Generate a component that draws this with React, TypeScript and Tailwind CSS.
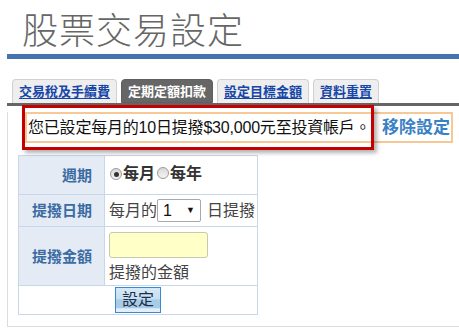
const tabs = [
  { label: "交易稅及手續費", active: false },
  { label: "定期定額扣款", active: true },
  { label: "設定目標金額", active: false },
  { label: "資料重置", active: false },
];

function Radio({ checked }: { checked?: boolean }) {
  return (
    <span className="inline-flex items-center justify-center w-[12px] h-[12px] rounded-full border border-[#9a9a9a] bg-[linear-gradient(#d8d8d8,#f4f4f4)]">
      {checked && <span className="w-[5px] h-[5px] rounded-full bg-[#333]" />}
    </span>
  );
}

export default function App() {
  return (
    <div className="relative w-[459px] h-[336px] overflow-hidden bg-white font-['Liberation_Sans','Noto_Sans_CJK_TC',sans-serif] text-[#222]">
      <h1 className="h-[54px] pt-[10px] pl-[22px] text-[36px] leading-[36px] font-light text-[#666] tracking-[1px] font-['Noto_Sans_CJK_TC',serif]">
        股票交易設定
      </h1>
      <div className="ml-[7px] h-[5px] bg-[#4374ad]" />

      <div className="mt-[20px] ml-[12px] flex gap-[4px] h-[24px]">
        {tabs.map((t) => (
          <div
            key={t.label}
            className={
              t.active
                ? "px-[6px] flex items-center rounded-t-[4px] border border-[#5f5f5f] bg-[#666] text-white text-[13px] font-bold leading-none"
                : "px-[6px] flex items-center rounded-t-[4px] border border-b-0 border-[#d0d0d0] bg-[#eee] text-[#1546a8] text-[13px] font-bold leading-none underline underline-offset-2"
            }
          >
            {t.label}
          </div>
        ))}
      </div>
      <div className="ml-[7px] h-[3px] bg-[#666]" />

      <div className="ml-[7px] h-[215px] border-l border-b border-[#dcdcdc]">
        <div className="mt-[6px] ml-[17px] w-[428px] h-[31px] border-2 border-[#f6c896] flex items-center justify-between pl-[1px] pr-[1px] text-[16px] leading-none">
          <span className="text-[#111] tracking-[-0.2px]">您已設定每月的10日提撥$30,000元至投資帳戶。</span>
          <span className="text-[17px] font-bold text-[#3a80c4]">移除設定</span>
        </div>

        <table className="mt-[12px] ml-[10px] w-[240px] border-collapse text-[16px] leading-none">
          <tbody>
            <tr className="h-[39px]">
              <td className="w-[86px] border border-[#c8d8ea] bg-[#e4ebf4] text-right pr-[12px] text-[15px] font-bold text-[#3c6ba3]">週期</td>
              <td className="border border-[#c8d8ea] pl-[5px] pb-[4px]">
                <span className="inline-flex items-center font-bold text-[#333]">
                  <Radio checked />
                  <span className="ml-[1px]">每月</span>
                  <span className="ml-[2px]"><Radio /></span>
                  <span className="ml-[1px]">每年</span>
                </span>
              </td>
            </tr>
            <tr className="h-[32px]">
              <td className="border border-[#c8d8ea] bg-[#e4ebf4] text-right pr-[12px] text-[15px] font-bold text-[#3c6ba3]">提撥日期</td>
              <td className="border border-[#c8d8ea] pl-[4px]">
                <div className="flex items-center text-[#444]">
                  <span>每月的</span>
                  <span className="w-[44px] h-[23px] border border-[#a9a9a9] rounded-[2px] flex items-center justify-between px-[5px] text-[#111]">
                    <span>1</span>
                    <span className="text-[9px]">▼</span>
                  </span>
                  <span className="ml-[6px]">日提撥</span>
                </div>
              </td>
            </tr>
            <tr className="h-[59px]">
              <td className="border border-[#c8d8ea] bg-[#e4ebf4] text-right pr-[12px] text-[15px] font-bold text-[#3c6ba3]">提撥金額</td>
              <td className="border border-[#c8d8ea] pl-[4px] align-top pt-[5px]">
                <div className="w-[99px] h-[26px] rounded-[3px] border border-[#c9c9b0] bg-[#ffffc8]" />
                <div className="mt-[7px] text-[#444]">提撥的金額</div>
              </td>
            </tr>
            <tr className="h-[29px]">
              <td colSpan={2} className="border border-[#c8d8ea] text-center">
                <button className="w-[46px] h-[26px] border border-[#3b8ad0] bg-[linear-gradient(#d6e9f6_0%,#c6dff0_45%,#a9cce6_50%,#a9cce6_84%,#e2eff8_86%)] text-[16px] text-[#1c2f4a] leading-none">
                  設定
                </button>
              </td>
            </tr>
          </tbody>
        </table>
      </div>

      <div className="absolute left-[22px] top-[105px] w-[352px] h-[45px] border-[3px] border-[#c40000] shadow-[3px_3px_4px_rgba(0,0,0,0.3)]" />
    </div>
  );
}
